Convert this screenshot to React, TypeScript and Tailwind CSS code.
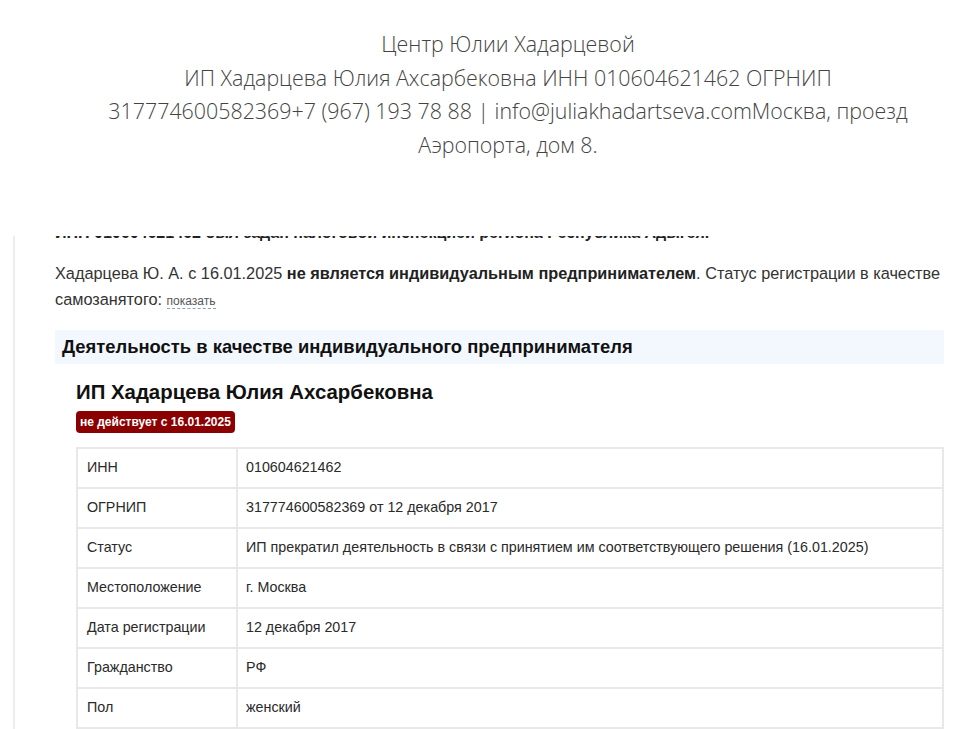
import React from "react";

const rows: [string, string][] = [
  ["ИНН", "010604621462"],
  ["ОГРНИП", "317774600582369 от 12 декабря 2017"],
  ["Статус", "ИП прекратил деятельность в связи с принятием им соответствующего решения (16.01.2025)"],
  ["Местоположение", "г. Москва"],
  ["Дата регистрации", "12 декабря 2017"],
  ["Гражданство", "РФ"],
  ["Пол", "женский"],
];

export default function App() {
  return (
    <div className="w-[974px] h-[729px] overflow-hidden bg-white">
      <header
        className="pt-[27px] pl-[42px] text-center text-[21.4px] leading-[33.5px] font-light text-[#444]"
        style={{ fontFamily: '"Open Sans", "Noto Sans", sans-serif' }}
      >
        <div>Центр Юлии Хадарцевой</div>
        <div>ИП Хадарцева Юлия Ахсарбековна ИНН 010604621462 ОГРНИП</div>
        <div>317774600582369+7 (967) 193 78 88 | info@juliakhadartseva.comМосква, проезд</div>
        <div>Аэропорта, дом 8.</div>
      </header>

      <section
        className="mt-[75px] ml-[13px] border-l-2 border-[#ececec] pl-[40px] pr-[30px] text-[#333]"
        style={{ fontFamily: '"Liberation Sans", Arial, sans-serif' }}
      >
        <div className="h-[5px] overflow-hidden">
          <p className="-mt-[13px] text-[16px] leading-[20px] font-bold text-[#222] whitespace-nowrap">
            ИНН 010604621462 был задан налоговой инспекцией региона Республика Адыгея.
          </p>
        </div>
        <p className="mt-[19px] text-[16.3px] leading-[26px]">
          Хадарцева Ю. А. с 16.01.2025{" "}
          <b className="text-[#222]">не является индивидуальным предпринимателем</b>. Статус
          регистрации в качестве самозанятого:{" "}
          <span className="text-[12px] text-[#555] border-b border-dashed border-[#8aa0c8]">показать</span>
        </p>
        <div className="mt-[16px] h-[34px] flex items-center bg-[#f3f8fe] pl-[7px] text-[18.4px] font-bold text-[#111]">
          Деятельность в качестве индивидуального предпринимателя
        </div>
        <div className="pl-[21px]">
          <h1 className="mt-[16px] text-[20.4px] leading-[24px] font-bold text-[#111]">
            ИП Хадарцева Юлия Ахсарбековна
          </h1>
          <div className="mt-[7px] inline-flex h-[22px] items-center rounded-[4px] bg-[#8b0000] px-[4px] text-[12px] font-bold text-white">
            не действует с 16.01.2025
          </div>
          <table className="mt-[14px] w-full border-collapse border-2 border-[#e8e8e8] text-[14.3px] text-[#2a2a2a]">
            <tbody>
              {rows.map(([k, v]) => (
                <tr key={k} className="h-[40px]">
                  <td className="w-[160px] border-2 border-[#e8e8e8] pl-[9px]">{k}</td>
                  <td className="border-2 border-[#e8e8e8] pl-[8px]">{v}</td>
                </tr>
              ))}
            </tbody>
          </table>
        </div>
      </section>
    </div>
  );
}
